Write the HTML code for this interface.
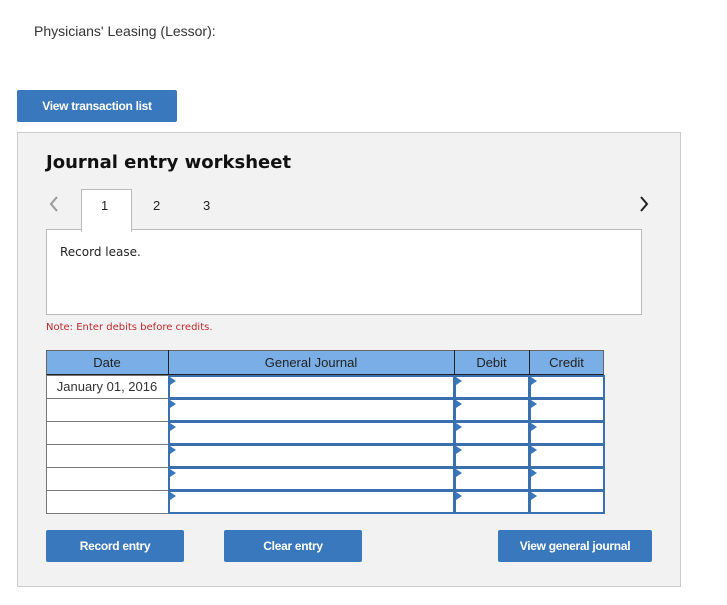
<!DOCTYPE html>
<html><head><style>
body{margin:0;width:727px;height:605px;background:#fff;font-family:"Liberation Sans",Arial,sans-serif;position:relative;overflow:hidden}
.a{position:absolute}
.btn{position:absolute;background:#3a78bd;color:#fff;font-weight:bold;font-size:12px;text-align:center;border-radius:2px;letter-spacing:-0.3px}
.cell{position:absolute;box-sizing:border-box;background:#fff}
.inp{position:absolute;box-sizing:border-box;background:#fff;border:2px solid #3a6fb0}
.tri{position:absolute;width:0;height:0;border-top:4px solid transparent;border-bottom:4px solid transparent;border-left:6px solid #3a78bd}
</style></head><body>
<div class="a" style="left:34px;top:23px;font-size:14px;color:#333">Physicians' Leasing (Lessor):</div>
<div class="btn" style="left:17px;top:90px;width:160px;height:32px;line-height:32px">View transaction list</div>
<div class="a" style="left:17px;top:132px;width:662px;height:453px;background:#f2f2f2;border:1px solid #ccc"></div>
<div class="a" style="left:46px;top:152px;font-family:'DejaVu Sans',sans-serif;font-weight:bold;font-size:18px;color:#111">Journal entry worksheet</div>
<svg class="a" style="left:48px;top:195px" width="12" height="18"><path d="M9 2 L3 9 L9 16" stroke="#999" stroke-width="2" fill="none"/></svg>
<svg class="a" style="left:638px;top:195px" width="12" height="18"><path d="M3 2 L9 9 L3 16" stroke="#222" stroke-width="2" fill="none"/></svg>
<div class="a" style="left:46px;top:229px;width:594px;height:84px;background:#fff;border:1px solid #bbb"></div>
<div class="a" style="left:81px;top:189px;width:49px;height:42px;background:#fff;border:1px solid #bbb;border-bottom:none"></div>
<div class="a" style="left:101px;top:198px;font-size:13px;color:#222">1</div>
<div class="a" style="left:153px;top:198px;font-size:13px;color:#222">2</div>
<div class="a" style="left:203px;top:198px;font-size:13px;color:#222">3</div>
<div class="a" style="left:60px;top:245px;font-family:'DejaVu Sans',sans-serif;font-size:12px;color:#222">Record lease.</div>
<div class="a" style="left:46px;top:322px;font-family:'DejaVu Sans',sans-serif;font-size:10px;color:#c0282d">Note: Enter debits before credits.</div>
<div class="a" style="left:46px;top:350px;width:558px;height:25px;background:#7aaee6;border:1px solid #666;box-sizing:border-box;border-bottom:1px solid #222"></div>
<div class="a" style="left:168px;top:350px;width:1px;height:25px;background:#222"></div>
<div class="a" style="left:454px;top:350px;width:1px;height:25px;background:#222"></div>
<div class="a" style="left:529px;top:350px;width:1px;height:25px;background:#222"></div>
<div class="a" style="left:46px;top:355px;width:122px;text-align:center;font-size:13px;color:#222">Date</div>
<div class="a" style="left:168px;top:355px;width:286px;text-align:center;font-size:13px;color:#222">General Journal</div>
<div class="a" style="left:454px;top:355px;width:75px;text-align:center;font-size:13px;color:#222">Debit</div>
<div class="a" style="left:529px;top:355px;width:75px;text-align:center;font-size:13px;color:#222">Credit</div>
<div id="rows"></div>
<script>
var h='';for(var i=0;i<6;i++){var y=375+i*23;
h+='<div class="cell" style="left:46px;top:'+y+'px;width:123px;height:24px;border:1px solid #777"></div>';
h+='<div class="inp" style="left:168px;top:'+y+'px;width:287px;height:24px"></div><div class="tri" style="left:170px;top:'+(y+2)+'px"></div>';
h+='<div class="inp" style="left:454px;top:'+y+'px;width:76px;height:24px"></div><div class="tri" style="left:456px;top:'+(y+2)+'px"></div>';
h+='<div class="inp" style="left:529px;top:'+y+'px;width:76px;height:24px"></div><div class="tri" style="left:531px;top:'+(y+2)+'px"></div>';}
document.getElementById('rows').innerHTML=h;
</script>
<div class="a" style="left:46px;top:379px;width:122px;text-align:center;font-size:13px;color:#333">January 01, 2016</div>
<div class="btn" style="left:46px;top:530px;width:138px;height:32px;line-height:32px">Record entry</div>
<div class="btn" style="left:224px;top:530px;width:138px;height:32px;line-height:32px">Clear entry</div>
<div class="btn" style="left:498px;top:530px;width:154px;height:32px;line-height:32px">View general journal</div>
</body></html>
